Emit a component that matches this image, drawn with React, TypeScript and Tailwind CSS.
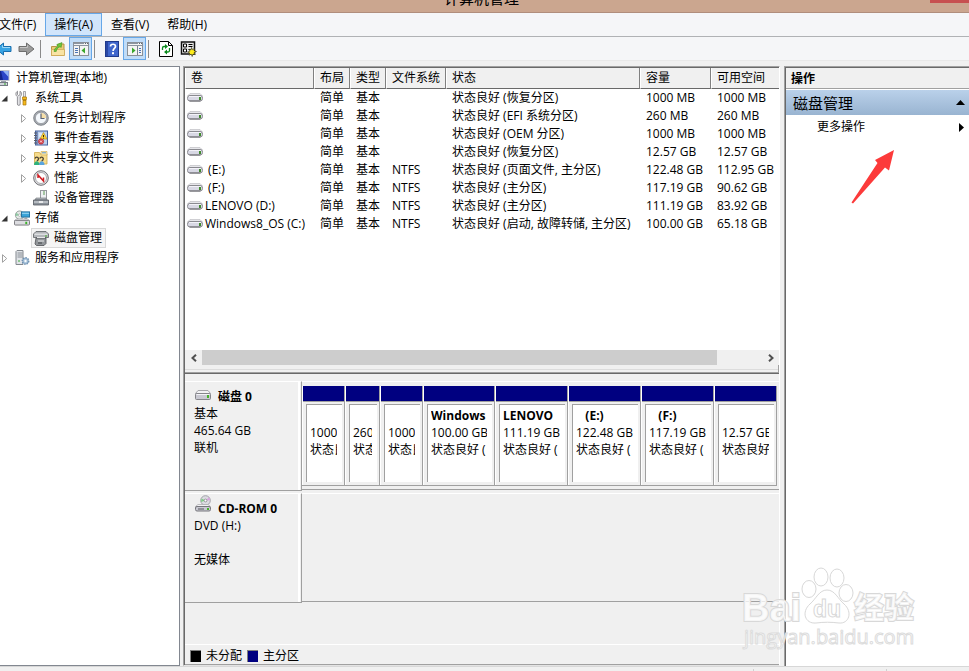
import { ReactNode } from 'react';

const volumes = [
    { name: '', fs: '', status: '状态良好 (恢复分区)', size: '1000 MB', free: '1000 MB' },
    { name: '', fs: '', status: '状态良好 (EFI 系统分区)', size: '260 MB', free: '260 MB' },
    { name: '', fs: '', status: '状态良好 (OEM 分区)', size: '1000 MB', free: '1000 MB' },
    { name: '', fs: '', status: '状态良好 (恢复分区)', size: '12.57 GB', free: '12.57 GB' },
    { name: '\u00a0(E:)', fs: 'NTFS', status: '状态良好 (页面文件, 主分区)', size: '122.48 GB', free: '112.95 GB' },
    { name: '\u00a0(F:)', fs: 'NTFS', status: '状态良好 (主分区)', size: '117.19 GB', free: '90.62 GB' },
    { name: 'LENOVO (D:)', fs: 'NTFS', status: '状态良好 (主分区)', size: '111.19 GB', free: '83.92 GB' },
    { name: 'Windows8_OS (C:)', fs: 'NTFS', status: '状态良好 (启动, 故障转储, 主分区)', size: '100.00 GB', free: '65.18 GB' },
];

const columns = ['卷', '布局', '类型', '文件系统', '状态', '容量', '可用空间'];

const partitions = [
    { name: '', size: '1000 MB', status: '状态良好' },
    { name: '', size: '260 MB', status: '状态良好' },
    { name: '', size: '1000 MB', status: '状态良好' },
    { name: 'Windows', size: '100.00 GB', status: '状态良好 (' },
    { name: 'LENOVO', size: '111.19 GB', status: '状态良好 (' },
    { name: '\u00a0\u00a0\u00a0(E:)', size: '122.48 GB', status: '状态良好 (' },
    { name: '\u00a0\u00a0\u00a0(F:)', size: '117.19 GB', status: '状态良好 (' },
    { name: '', size: '12.57 GB', status: '状态良好' },
];

function DriveIcon() {
    return (
        <svg width="16" height="9" viewBox="0 0 16 9" className="mb-0.5 shrink-0">
            <path d="M3 .5h10L15.5 3H.5z" fill="#e6e6ea" stroke="#c0c0c4" strokeWidth=".7" />
            <rect x=".5" y="2.5" width="15" height="5.5" rx="2.5" fill="#d8d8e4" stroke="#8a8a90" />
            <path d="M2 3.5h12" stroke="#f2f2f8" />
            <path d="M2.500 8h11" stroke="#6c6c72" />
            <rect x="12" y="4" width="2" height="3" fill="#3f8a2c" />
        </svg>
    );
}

function DiskIcon() {
    return (
        <svg width="16" height="10" viewBox="0 0 16 10">
            <path d="M3 .5h10l2.5 3H.5z" fill="#f2f2f4" stroke="#a6a6aa" />
            <rect x=".5" y="3.5" width="15" height="6" rx="1" fill="#c9c9d2" stroke="#85858a" />
            <path d="M1.5 4.5h13" stroke="#f4f4f8" />
            <rect x="12" y="5" width="2" height="3" fill="#45b12a" />
        </svg>
    );
}

function CdIcon() {
    return (
        <svg width="16" height="17" viewBox="0 0 16 17">
            <circle cx="10.5" cy="5.5" r="4.8" fill="#dcdce2" stroke="#a2a2a8" />
            <path d="M10.5 5.5L14 2.2a4.8 4.8 0 0 1 1.2 3z" fill="#d8a6dd" />
            <path d="M10.5 5.5L6.5 3.5 6 7z" fill="#7fcf86" />
            <circle cx="10.5" cy="5.5" r="1.4" fill="#fff" stroke="#77777d" strokeWidth=".7" />
            <path d="M3 9.5h10l2.5 2H.5z" fill="#f2f2f4" stroke="#a6a6aa" strokeWidth=".7" />
            <rect x=".5" y="11.5" width="15" height="4.5" rx="1.5" fill="#c9c9d2" stroke="#77777d" />
            <path d="M3 14h6" stroke="#5a5a60" />
            <rect x="12" y="13" width="2" height="2" fill="#45b12a" />
        </svg>
    );
}

function ComputerIcon() {
    return (
        <svg width="16" height="16" viewBox="0 0 16 16">
            <rect x="2.500" y=".5" width="12.500" height="10" fill="#2b46c8" stroke="#c0c4cc" />
            <path d="M9 1h5.500v6z" fill="#8fb2f6" />
            <path d="M3 1h4l2 9H3z" fill="#13258c" />
            <rect x="7" y="11" width="5" height="1.5" fill="#9aa0aa" />
            <rect x="4.500" y="12.5" width="9" height="3" fill="#d3d6dc" stroke="#747a84" />
            <path d="M10 14h2" stroke="#2fa52f" />
        </svg>
    );
}

function ToolsIcon() {
    return (
        <svg width="16" height="16" viewBox="0 0 16 16">
            <path d="M3.5 1.2v3.3l1.2 1.2L6 4.500V1.200c2.200 1.200 2 4.300.2 5.500v7.300a1.300 1.300 0 0 1-2.800 0V6.700C1.400 5.500 1.300 2.400 3.500 1.200z" fill="#e3e3e6" stroke="#7c7c82" strokeWidth=".8" />
            <path d="M9.500 1.500h2v5.500h-2z" fill="#e8e8ea" stroke="#85858a" strokeWidth=".7" />
            <path d="M8.500 7h4v2.500l-.5 1v4.500h-3v-4.500l-.5-1z" fill="#f5b91c" stroke="#a97708" strokeWidth=".7" />
            <path d="M9 10h3" stroke="#7a5606" />
        </svg>
    );
}

function ClockIcon() {
    return (
        <svg width="16" height="16" viewBox="0 0 16 16">
            <circle cx="8" cy="8" r="7.300" fill="#a8acb2" stroke="#6c7178" strokeWidth=".8" />
            <circle cx="8" cy="8" r="5.600" fill="#f4f8fc" stroke="#83878d" strokeWidth=".6" />
            <path d="M8 8V2.800A5.200 5.200 0 0 1 13.200 8z" fill="#f6dfa8" />
            <path d="M8 3.500V8.500h3.500" fill="none" stroke="#5a6274" strokeWidth="1.200" />
        </svg>
    );
}

function EventIcon() {
    return (
        <svg width="16" height="16" viewBox="0 0 16 16">
            <rect x="2.500" y="1" width="12" height="14" fill="#bcd0ee" stroke="#47639f" />
            <path d="M4 1.500v13" stroke="#324c8a" />
            <path d="M1 3h3M1 5.500h3M1 8h3M1 10.500h3M1 13h3" stroke="#5c5f68" />
            <path d="M6 4h3M6 6h2" stroke="#fff" />
            <path d="M10.500 2.500L14 9H7z" fill="#ffd43a" stroke="#bb8a0a" strokeWidth=".6" />
            <path d="M10.500 5v2M10.500 7.700v.8" stroke="#3c2d00" />
            <circle cx="8" cy="11.500" r="2.700" fill="#d9434a" stroke="#a11f2c" strokeWidth=".5" />
            <path d="M7 10.500l2 2M9 10.500l-2 2" stroke="#fff" strokeWidth=".8" />
        </svg>
    );
}

function SharedIcon() {
    return (
        <svg width="16" height="16" viewBox="0 0 16 16">
            <path d="M1.500 2.500h5l1 1.500h6.500v10h-12.500z" fill="#f7dc8c" stroke="#cfa84a" strokeWidth=".8" />
            <path d="M8 1.500h6v3.500H8z" fill="#fbe9b2" stroke="#cfa84a" strokeWidth=".6" />
            <path d="M9 2.800h4" stroke="#5d9ad4" />
            <path d="M2 8.500c.5-1.800 3-1.800 3.500 0 .2 1.500-.6 2-1.600 2.500M6.800 8.500c.5-1.800 3-1.800 3.500 0 .2 1.500-.6 2-1.600 2.500" fill="none" stroke="#4b4334" strokeWidth="1.300" />
            <path d="M1 15c0-5 5.500-5 5.500 0z" fill="#2fb27c" />
            <path d="M6 15c0-5 5.500-5 5.500 0z" fill="#5aa4de" />
        </svg>
    );
}

function PerfIcon() {
    return (
        <svg width="16" height="16" viewBox="0 0 16 16">
            <circle cx="8" cy="8" r="7.300" fill="#e2e2e4" stroke="#5d5d62" strokeWidth=".9" />
            <circle cx="8" cy="8" r="5.500" fill="#fff" stroke="#8b8b90" strokeWidth=".7" />
            <path d="M5 8V5l5.500 6V7.500" fill="none" stroke="#d01c22" strokeWidth="1.500" />
        </svg>
    );
}

function DeviceIcon() {
    return (
        <svg width="16" height="16" viewBox="0 0 16 16">
            <rect x="7.500" y=".500" width="6" height="8" fill="#eef0f2" stroke="#96999e" />
            <path d="M10 2h2M10 4h2" stroke="#5b9a55" />
            <path d="M3 8h10l1 2H2z" fill="#b6bac0" stroke="#6a6e74" strokeWidth=".6" />
            <path d="M.5 10h15v5H.5z" fill="#8b929a" stroke="#565b62" strokeWidth=".8" />
            <path d="M1 12h14" stroke="#dfe3e7" />
            <rect x="6" y="11" width="4" height="2" fill="#e8eaec" />
        </svg>
    );
}

function StorageIcon() {
    return (
        <svg width="16" height="16" viewBox="0 0 17 16">
            <circle cx="6" cy="5" r="4.500" fill="#e4e9e6" stroke="#7f8a86" strokeWidth=".8" />
            <path d="M6 5L2.500 2.500A4 4 0 0 0 2 6z" fill="#8ecba3" />
            <circle cx="6" cy="5" r="1.300" fill="#fff" stroke="#8b9491" strokeWidth=".6" />
            <rect x="8" y="1.500" width="8.500" height="5.500" fill="#3aa4d8" stroke="#216f9e" />
            <path d="M8.500 3h7.500" stroke="#a5dcf5" />
            <path d="M11 8.200h3" stroke="#808488" />
            <path d="M2.500 9h12l2 2H.5z" fill="#f0f0f2" stroke="#9a9aa0" strokeWidth=".6" />
            <rect x=".5" y="10.500" width="16" height="5" rx="1" fill="#dcdce0" stroke="#74747a" />
            <rect x="12" y="12" width="2" height="2.500" fill="#3cb52a" />
        </svg>
    );
}

function DiskMgmtIcon() {
    return (
        <svg width="16" height="16" viewBox="0 0 16 16">
            <path d="M3 1.500h10l2.500 2.500v3.500H.5V4z" fill="#b4b7bb" stroke="#5c5f63" strokeWidth=".8" />
            <path d="M1.500 4.200h13" stroke="#f0f1f2" />
            <path d="M3 8h10v5.500l-2 2H3.500L2 14z" fill="#92969a" stroke="#4c4f53" strokeWidth=".8" />
            <path d="M4 7.500h8M5 11h6" stroke="#e8e9ea" />
            <path d="M5 13h4" stroke="#3f4246" />
            <rect x="12" y="5.500" width="2" height="1" fill="#42b42d" />
        </svg>
    );
}

function ServicesIcon() {
    return (
        <svg width="16" height="16" viewBox="0 0 16 16">
            <path d="M3 .5h6v14H2v-13z" fill="#e1e4e8" stroke="#83888e" />
            <path d="M3.500 3h5M3.500 5h5M3.500 7h5" stroke="#8a9097" />
            <path d="M4 11h2" stroke="#3ca93a" />
            <circle cx="11.500" cy="11" r="3.300" fill="#c6d9ea" stroke="#6c8fb0" strokeWidth="1.300" strokeDasharray="1.500 1" />
            <circle cx="11.500" cy="11" r="2.600" fill="#b5cde2" stroke="#6c8fb0" strokeWidth=".6" />
            <circle cx="11.500" cy="11" r="1.100" fill="#fff" />
        </svg>
    );
}

function BlockArrow({ back = false }: { back?: boolean }) {
    return (
        <svg width="17" height="14" viewBox="0 0 17 14" className={back ? '-scale-x-100' : ''}>
            <path
                d="M1 4.500h7.500V1L16 7l-7.500 6V9.500H1z"
                fill={back ? '#37a3e4' : '#9b9b9b'}
                stroke={back ? '#1a6fae' : '#6e6e6e'}
            />
            <path d="M2 5.500h7.500V3.200" fill="none" stroke={back ? '#9bd8f8' : '#c4c4c4'} />
        </svg>
    );
}

function FolderUpIcon() {
    return (
        <svg width="16" height="16" viewBox="0 0 16 16">
            <path d="M1.500 5.500h5l2-2.500h5.500v11.500H1.500z" fill="#eccb78" stroke="#b89446" />
            <path d="M1.500 8.500h13v6h-13z" fill="#f9e3a4" stroke="#cfa956" strokeWidth=".8" />
            <path d="M4 10.500c.2-2.500 1.500-4 4-5L6.800 3.500 12 1.500l-.8 5L10 5.700c-2 .8-3.300 2-3.800 4.800z" fill="#6cc63a" stroke="#3c8a1a" strokeWidth=".5" />
        </svg>
    );
}

function PaneIcon({ right = false }: { right?: boolean }) {
    return (
        <svg width="16" height="14" viewBox="0 0 16 14">
            <rect x=".5" y=".5" width="15" height="13" fill="#f4f4f4" stroke="#8a9098" />
            <path d="M1 1.500h10M1 3.500h14" stroke="#8c95a1" />
            <path d="M12 1.500h1M14 1.500h1" stroke="#5f6872" />
            <path d={right ? 'M10.500 4v9' : 'M6.500 4v9'} stroke="#7b828c" />
            {right ? (
                <>
                    <path d="M12 6.500h2M12 8.500h2M12 10.500h2" stroke="#4c74b4" />
                    <path d="M5 5.500v6l3.500-3z" fill="#3aa82c" />
                </>
            ) : (
                <>
                    <path d="M2 6.500h3M2 8.500h3M2 10.500h3" stroke="#4c74b4" />
                    <path d="M12 5.500v6l-3.500-3z" fill="#3aa82c" />
                </>
            )}
        </svg>
    );
}

function HelpIcon() {
    return (
        <svg width="14" height="16" viewBox="0 0 14 16">
            <rect x=".5" y=".5" width="13" height="15" fill="#3f66cc" stroke="#1f3a8c" />
            <path d="M2 1v14" stroke="#243f98" strokeWidth="1.500" />
            <path d="M5.500 5.500c0-3 5-3 5 0 0 2-2.400 2-2.400 4.500" fill="none" stroke="#fff" strokeWidth="1.700" />
            <rect x="7" y="11.200" width="2" height="2" fill="#fff" />
        </svg>
    );
}

function RefreshIcon() {
    return (
        <svg width="14" height="16" viewBox="0 0 14 16">
            <path d="M.5.5h9l4 4v11H.5z" fill="#fff" stroke="#000" />
            <path d="M9.500.5v4h4" fill="none" stroke="#000" />
            <path d="M3.500 9V7A1.500 1.500 0 0 1 5 5.500h2M10.500 7v2.500A1.500 1.500 0 0 1 9 11H7" fill="none" stroke="#0a8a1c" strokeWidth="1.300" />
            <path d="M6 3v5l3-2.500zM8 8.500v5L5 11z" fill="#0a8a1c" />
        </svg>
    );
}

function SettingsIcon() {
    return (
        <svg width="17" height="16" viewBox="0 0 17 16">
            <rect x="1.500" y="1" width="13" height="12" fill="#e8e8e8" stroke="#111" strokeWidth="1.500" />
            <path d="M3.500 3h3v3h-3zM3.500 8h3v3h-3z" fill="#fff" stroke="#000" />
            <path d="M8.500 3.500h4M8.500 5.500h4M8.500 8.500h2" stroke="#000" />
            <path d="M11.500 6.500l1 2.200 2-1.200-.5 2.200 2.500.8-2.300 1 1 2.200-2.200-.7-.8 2.500-1-2.300-2.200 1 .7-2.200-2.200-1 2.400-.8-.8-2 2 .7z" fill="#ffee1c" stroke="#222" strokeWidth=".6" />
        </svg>
    );
}

function Expander({ open }: { open?: boolean }) {
    return (
        <svg width="8" height="9" viewBox="0 0 8 9">
            {open ? <path d="M6.500 1.500v6h-6z" fill="#333" /> : <path d="M1.500.7v7.600L5.700 4.500z" fill="#fff" stroke="#a0a0a0" />}
        </svg>
    );
}

type NodeProps = { icon: ReactNode; label: string; deep?: boolean; state?: 'open' | 'closed'; selected?: boolean };

function TreeNode({ icon, label, deep, state, selected }: NodeProps) {
    return (
        <li className={`flex h-5 items-center whitespace-nowrap ${deep ? 'pl-[19px]' : ''}`}>
            <span className="w-3 shrink-0 pl-px">{state && <Expander open={state === 'open'} />}</span>
            <span
                className={`flex h-5 items-center gap-[5px] border px-px pr-[3px] ${selected ? 'border-[#d9d9d9] bg-[#f5f5f5]' : 'border-transparent'}`}
            >
                {icon}
                {label}
            </span>
        </li>
    );
}

function MenuItem({ label, active }: { label: string; active?: boolean }) {
    return (
        <button
            className={`h-[23px] border px-2 ${active ? 'border-[#66a7e8] bg-[#d1e5fb]' : 'border-transparent'}`}
        >
            {label}
        </button>
    );
}

function ToolButton({ label, pressed, children }: { label: string; pressed?: boolean; children: ReactNode }) {
    return (
        <button
            aria-label={label}
            className={`flex h-[23px] w-[23px] shrink-0 items-center justify-center border ${pressed ? 'border-[#66a7e8] bg-[#c0dcf8]' : 'border-transparent'}`}
        >
            {children}
        </button>
    );
}

function Separator() {
    return <span className="ml-0.5 mr-[5px] h-[18px] w-px shrink-0 bg-[#8a8a8a]" />;
}

function DiskRow({ icon, title, lines, children }: { icon: ReactNode; title: string; lines: string[]; children?: ReactNode }) {
    return (
        <div className="flex h-[110px]">
            <div className="w-[117px] shrink-0 border-r border-b border-t border-r-[#a0a0a0] border-b-[#a0a0a0] border-t-white pr-px">
                <div className="h-full border-r-2 border-white pl-[9px] pt-1.5 leading-[17px]">
                    <div className="flex h-[17px] items-start gap-[7px] pl-px font-bold">
                        <span className="flex h-3 items-end">{icon}</span>
                        {title}
                    </div>
                    {lines.map((line, i) => (
                        <p key={i} className="h-[17px]">{line}</p>
                    ))}
                </div>
            </div>
            <div className="mb-px min-w-0 flex-1 border-b border-t border-b-[#a0a0a0] border-t-white">{children}</div>
        </div>
    );
}

function Legend({ color, label }: { color: string; label: string }) {
    return (
        <span className="flex items-center gap-[5px]">
            <span className={`h-3 w-[11px] border-l border-t border-[#808080] ${color}`} />
            {label}
        </span>
    );
}

function Watermark() {
    return (
        <div className="pointer-events-none absolute bottom-6 right-[49px] w-[180px]">
            <svg width="180" height="80" viewBox="0 0 180 80" fill="#fff" fillOpacity=".75" stroke="#d8d8d8">
                <ellipse cx="69" cy="44" rx="7" ry="8.500" />
                <ellipse cx="81" cy="32" rx="7" ry="9" />
                <ellipse cx="97" cy="33" rx="7" ry="9" />
                <ellipse cx="106" cy="48" rx="7" ry="8.500" />
                <path d="M87 45c8 0 11 9 17 14 9 8 5 20-5 19-8-1-15-1-23 0-11 1-15-11-6-19 6-5 9-14 17-14z" />
                <text x="2" y="76" strokeWidth="2" paintOrder="stroke" className="font-['Liberation_Sans',sans-serif] text-[38px] font-bold">Bai</text>
                <text x="73" y="72" className="font-['Liberation_Sans',sans-serif] text-[23px] font-bold">du</text>
                <text x="114" y="73" strokeWidth="2" paintOrder="stroke" className="font-['Noto_Sans_CJK_SC',sans-serif] text-[30px] font-bold">经验</text>
            </svg>
            <p className="mt-0.5 pl-1 text-[20px] leading-5 text-white/80 [-webkit-text-stroke:1px_#dcdcdc]">
                jingyan.baidu.com
            </p>
        </div>
    );
}

export default function App() {
    return (
        <div className="relative flex h-screen flex-col overflow-hidden bg-[#f0f0f0] font-['Open_Sans','Noto_Sans_CJK_SC',sans-serif] text-xs text-black">
            {/* Title bar */}
            <header className="flex h-[13px] shrink-0 items-end justify-center border-b border-[#b08e7d] bg-[#cba68f] pr-1.5">
                <h1 className="mb-1 text-[15px] leading-5">计算机管理</h1>
                <span className="absolute right-0 top-0 h-[3px] w-[39px] bg-[#c75050]" />
            </header>

            {/* Menu */}
            <nav className="flex h-6 shrink-0 border-b border-[#b0b2b5] bg-[#f5f6f8]">
                <div className="-ml-2.5 flex">
                    <MenuItem label="文件(F)" />
                    <MenuItem label="操作(A)" active />
                    <MenuItem label="查看(V)" />
                    <MenuItem label="帮助(H)" />
                </div>
            </nav>

            {/* Toolbar */}
            <div className="flex h-6 shrink-0 items-end border-b border-[#e8e8e8] bg-[#f5f6f8]">
                <div className="-ml-2 flex items-center">
                    <ToolButton label="后退"><BlockArrow back /></ToolButton>
                    <ToolButton label="前进"><BlockArrow /></ToolButton>
                    <Separator />
                    <ToolButton label="上一级"><FolderUpIcon /></ToolButton>
                    <ToolButton label="显示/隐藏控制台树" pressed><PaneIcon /></ToolButton>
                    <Separator />
                    <ToolButton label="帮助"><HelpIcon /></ToolButton>
                    <ToolButton label="显示/隐藏操作窗格" pressed><PaneIcon right /></ToolButton>
                    <Separator />
                    <ToolButton label="刷新"><RefreshIcon /></ToolButton>
                    <ToolButton label="设置"><SettingsIcon /></ToolButton>
                </div>
            </div>

            <main className="mt-[5px] flex min-h-0 flex-1">
                {/* Console tree */}
                <aside className="w-[180px] shrink-0 overflow-hidden border-b border-r border-t border-[#828790] bg-white pt-px">
                    <ul>
                        <li className="-ml-1.5 flex h-5 items-center gap-1.5 whitespace-nowrap">
                            <ComputerIcon />
                            计算机管理(本地)
                        </li>
                        <TreeNode icon={<ToolsIcon />} label="系统工具" state="open" />
                        <TreeNode icon={<ClockIcon />} label="任务计划程序" deep state="closed" />
                        <TreeNode icon={<EventIcon />} label="事件查看器" deep state="closed" />
                        <TreeNode icon={<SharedIcon />} label="共享文件夹" deep state="closed" />
                        <TreeNode icon={<PerfIcon />} label="性能" deep state="closed" />
                        <TreeNode icon={<DeviceIcon />} label="设备管理器" deep />
                        <TreeNode icon={<StorageIcon />} label="存储" state="open" />
                        <TreeNode icon={<DiskMgmtIcon />} label="磁盘管理" deep selected />
                        <TreeNode icon={<ServicesIcon />} label="服务和应用程序" state="closed" />
                    </ul>
                </aside>

                <section className="ml-[3px] flex min-w-0 flex-1 flex-col border border-b-[#e3e3e3] border-l-[#a0a0a0] border-r-white border-t-[#a0a0a0]">
                    <div className="flex min-h-0 flex-1 flex-col border-l border-t border-[#696969]">
                        {/* Volume list */}
                        <div className="flex h-[306px] shrink-0 flex-col border-b border-[#696969] bg-white">
                            <div className="min-h-0 flex-1 overflow-hidden">
                                <table className="w-full table-fixed border-separate border-spacing-0 whitespace-nowrap text-left">
                                    <colgroup>
                                        <col className="w-[129px]" />
                                        <col className="w-9" />
                                        <col className="w-9" />
                                        <col className="w-[60px]" />
                                        <col />
                                        <col className="w-[71px]" />
                                        <col className="w-[68px]" />
                                    </colgroup>
                                    <thead>
                                        <tr className="h-[21px]">
                                            {columns.map((c) => (
                                                <th key={c} className="border-b border-l border-r border-b-[#696969] border-l-white border-r-[#808080] bg-[#f0f0f0] p-0 pl-[5px] font-normal leading-5 last:border-r-0">
                                                    {c}
                                                </th>
                                            ))}
                                        </tr>
                                    </thead>
                                    <tbody>
                                        {volumes.map((v, i) => (
                                            <tr key={i} className="h-[18px] leading-[18px]">
                                                <td className="p-0 pl-0.5">
                                                    <span className="flex items-center gap-0.5">
                                                        <DriveIcon />
                                                        {v.name}
                                                    </span>
                                                </td>
                                                <td className="p-0 pl-1.5">简单</td>
                                                <td className="p-0 pl-1.5">基本</td>
                                                <td className="p-0 pl-1.5">{v.fs}</td>
                                                <td className="p-0 pl-1.5">{v.status}</td>
                                                <td className="p-0 pl-1.5">{v.size}</td>
                                                <td className="p-0 pl-1.5">{v.free}</td>
                                            </tr>
                                        ))}
                                    </tbody>
                                </table>
                            </div>
                            <div className="flex h-[15px] shrink-0 bg-[#f0f0f0]">
                                <button aria-label="向左滚动" className="flex w-[17px] items-center justify-center">
                                    <svg width="6" height="8" viewBox="0 0 6 8"><path d="M5 .8L1.500 4 5 7.200" fill="none" stroke="#505050" strokeWidth="2" /></svg>
                                </button>
                                <div className="flex-1"><div className="h-full w-[92%] bg-[#cdcdcd]" /></div>
                                <button aria-label="向右滚动" className="flex w-[17px] items-center justify-center">
                                    <svg width="6" height="8" viewBox="0 0 6 8"><path d="M1 .8L4.500 4 1 7.200" fill="none" stroke="#505050" strokeWidth="2" /></svg>
                                </button>
                            </div>
                            <div className="h-2 shrink-0 border-b border-r border-[#a0a0a0] bg-[#f0f0f0] pt-1">
                                <div className="h-px bg-[#dcdcdc]" />
                            </div>
                        </div>

                        {/* Graphical view */}
                        <div className="flex min-h-0 flex-1 flex-col border-b border-[#a0a0a0] pt-[7px]">
                            <div className="flex flex-col gap-0.5">
                                <DiskRow icon={<DiskIcon />} title="磁盘 0" lines={['基本', '465.64 GB', '联机']}>
                                    <div className="mr-0.5 mt-1 grid h-[100px] grid-cols-[43fr_35fr_43fr_72fr_73fr_73fr_73fr_63fr] border-b border-[#a0a0a0]">
                                        {partitions.map((p, i) => (
                                            <div key={i} className="flex min-w-0 flex-col border-l border-r border-l-white border-r-[#a0a0a0]">
                                                <div className="h-4 shrink-0 border-b border-[#a0a0a0] bg-[#000080]" />
                                                <div className="mb-[3px] ml-[3px] mr-0.5 mt-0.5 flex-1 border-l border-t border-[#a0a0a0] bg-white pl-[3px] pr-[5px] pt-0.5">
                                                    <div className="overflow-hidden whitespace-nowrap leading-[17px]">
                                                        <p className="h-[17px] font-bold">{p.name}</p>
                                                        <p className="h-[17px]">{p.size}</p>
                                                        <p className="h-[17px]">{p.status}</p>
                                                    </div>
                                                </div>
                                            </div>
                                        ))}
                                    </div>
                                </DiskRow>
                                <DiskRow icon={<CdIcon />} title="CD-ROM 0" lines={['DVD (H:)', '', '无媒体']} />
                            </div>
                            <div className="mt-auto flex h-5 shrink-0 items-center gap-[5px] border-t border-white pl-[5px] pt-0.5">
                                <Legend color="bg-black" label="未分配" />
                                <Legend color="bg-[#000080]" label="主分区" />
                            </div>
                        </div>
                    </div>
                </section>

                {/* Actions pane */}
                <aside className="ml-1 w-[185px] shrink-0 border-l border-t border-[#a0a0a0]">
                    <div className="relative h-full border-l border-t border-[#696969] bg-white">
                        <h2 className="h-[21px] border-b border-[#a0a0a0] bg-[#f0f0f0] pl-[5px] font-bold leading-[22px]">操作</h2>
                        <button className="mt-px flex h-[25px] w-full items-center justify-between bg-linear-to-b from-[#bad1ea] to-[#99b4d1] pl-[7px] pr-1 text-[15px]">
                            磁盘管理
                            <svg width="9" height="5" viewBox="0 0 9 5"><path d="M0 5h9L4.500 0z" /></svg>
                        </button>
                        <button className="flex h-6 w-full items-center justify-between pl-[31px] pr-[5px]">
                            更多操作
                            <svg width="5" height="9" viewBox="0 0 5 9"><path d="M0 0v9l5-4.500z" /></svg>
                        </button>
                        <svg width="44" height="56" viewBox="0 0 44 56" className="absolute left-[65px] top-[81px]">
                            <path d="M43 1L24 11l2.500 3L.5 53.500l1.500 1L34 18.500l4 3z" fill="#fc3a3a" />
                        </svg>
                    </div>
                </aside>
            </main>

            {/* Status bar */}
            <footer className="flex h-[5px] shrink-0 justify-end border-t border-[#d7d7d7] pt-0.5">
                <span className="w-[133px] border-l border-[#d0d0d0]" />
                <span className="w-[83px] border-l border-[#d0d0d0]" />
            </footer>

            <Watermark />
        </div>
    );
}
